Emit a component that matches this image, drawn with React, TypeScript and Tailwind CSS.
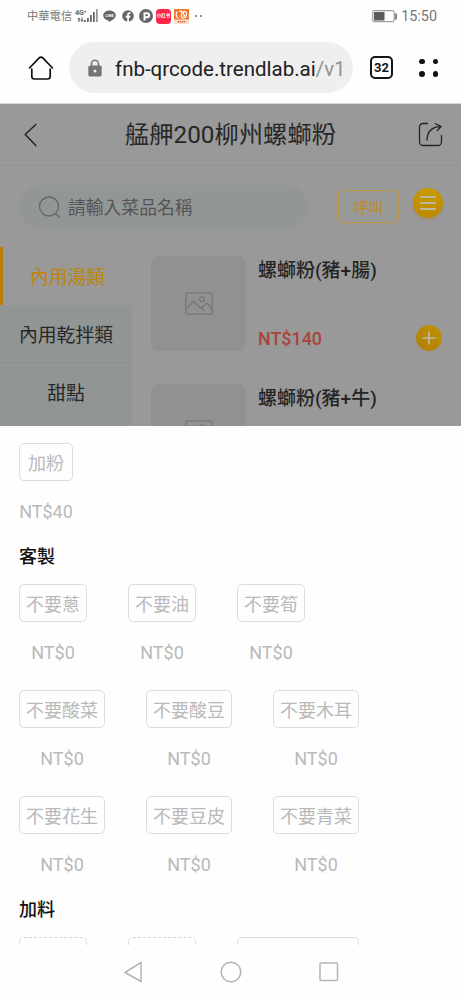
import { clsx } from "clsx";

type Option = { name: string; price: string };

const categories = ["內用湯類", "內用乾拌類", "甜點"];

const dishes: { name: string; price?: string }[] = [
    { name: "螺螄粉(豬+腸)", price: "NT$140" },
    { name: "螺螄粉(豬+牛)" },
];

const customRows: Option[][] = [
    [
        { name: "不要蔥", price: "NT$0" },
        { name: "不要油", price: "NT$0" },
        { name: "不要筍", price: "NT$0" },
    ],
    [
        { name: "不要酸菜", price: "NT$0" },
        { name: "不要酸豆", price: "NT$0" },
        { name: "不要木耳", price: "NT$0" },
    ],
    [
        { name: "不要花生", price: "NT$0" },
        { name: "不要豆皮", price: "NT$0" },
        { name: "不要青菜", price: "NT$0" },
    ],
];

const SignalIcon = () => (
    <svg width="24" height="17" viewBox="0 0 24 17" fill="#666">
        <text x="0" y="6.5" fontSize="7" fontWeight="700">
            4G⁺
        </text>
        <path d="M4 9.5 2.2 11.5h1.2V14h1.2v-2.5h1zM7 14l1.8-2H7.6V9.5H6.4V12h-1z" />
        <path d="M9 12h1.8v2H9zM12 10h1.8v4H12zM15 7h1.8v7H15zM18 4h1.8v10H18zM21.3 1h1.2v13h-1.2z" />
    </svg>
);

const StatusBar = () => (
    <div className="flex h-8 items-center pl-[27px] pr-[24px] text-[#777]">
        <span className="w-[48px] whitespace-nowrap pt-[2px] text-[11.3px] leading-4">
            中華電信
        </span>
        <SignalIcon />
        <svg className="ml-[4px]" width="13" height="13" viewBox="0 0 13 13">
            <path
                d="M6.5.5C3 .5.2 2.7.2 5.5c0 2.4 2.1 4.4 5 4.9.5.1.5.5.4 1.7 2.6-1.2 7.2-3.7 7.2-6.6C12.8 2.7 10 .5 6.5.5z"
                fill="#666"
            />
            <text
                x="6.5"
                y="7"
                fontSize="4"
                fontWeight="700"
                textAnchor="middle"
                fill="#fff"
            >
                LINE
            </text>
        </svg>
        <svg className="ml-[6px]" width="12" height="12" viewBox="0 0 12 12">
            <circle cx="6" cy="6" r="5.8" fill="#666" />
            <path
                d="M5.2 12V7.5H3.7V5.8h1.5V4.7c0-1.6.8-2.4 2.2-2.4h1.2v1.6h-.8c-.7 0-.9.3-.9.9v1h1.7l-.3 1.7H6.9V12z"
                fill="#fff"
            />
        </svg>
        <span className="ml-[5px] flex size-[14px] items-center justify-center rounded-full bg-[#666]">
            <svg width="9" height="9" viewBox="0 0 9 9" fill="none">
                <path
                    d="M2.5 8.5V1.3h2.6a2 2 0 0 1 0 4H2.5"
                    stroke="#fff"
                    strokeWidth="1.9"
                />
            </svg>
        </span>
        <span className="ml-[3px] flex size-[15px] items-center justify-center rounded-[4px] bg-[#fb2547]">
            <span className="text-[4.5px] font-bold leading-none text-white">
                小红书
            </span>
        </span>
        <svg className="ml-[3px]" width="15" height="15" viewBox="0 0 15 15">
            <path d="M0 0h15v15H0z" fill="#fbe3d2" />
            <path d="M0 0h15v10.5H0z" fill="#f0782f" />
            <path
                d="M3 2.5C1.5 5 2 8.5 4.5 9M5 2.5c3-1 4 1 2.5 3.5C6.5 8 8 9.5 10 9c3-1 3.5-5 1-6.5C9.5 2 8.5 3.5 9.5 5s1.5 1.5 0 2.5"
                fill="none"
                stroke="#fff"
                strokeWidth="1.2"
            />
            <path
                d="M3.5 12.8h8"
                stroke="#e9603c"
                strokeWidth="1.6"
                strokeDasharray="1.6 .5"
            />
        </svg>
        <span className="ml-[6px] size-[2px] rounded-full bg-[#666]" />
        <span className="ml-[3px] size-[2px] rounded-full bg-[#666]" />
        <svg
            className="ml-auto"
            width="26"
            height="13"
            viewBox="0 0 26 13"
            fill="none"
        >
            <rect x=".7" y=".7" width="21.5" height="11" rx="1.5" stroke="#888" />
            <rect x="2" y="2" width="10.5" height="8.5" fill="#5c5c5c" />
            <path d="M24 3.5v6" stroke="#777" strokeWidth="1.8" />
        </svg>
        <span className="ml-[3px] pt-[1px] text-[14.4px] leading-4">15:50</span>
    </div>
);

const AddressBar = () => (
    <div className="flex h-[72px] items-center border-b border-[#d8d8d8] pl-[28px] pr-[23px]">
        <svg
            width="26"
            height="26"
            viewBox="0 0 26 26"
            fill="none"
            stroke="#111"
            strokeWidth="1.7"
            strokeLinecap="round"
            strokeLinejoin="round"
        >
            <path d="M1.5 13 11.2 2.9a2.5 2.5 0 0 1 3.6 0L24.5 13" />
            <path d="M3.8 14v7.3a2.7 2.7 0 0 0 2.7 2.7h13a2.7 2.7 0 0 0 2.7-2.7V14" />
        </svg>
        <div className="ml-[15px] flex h-[51px] w-[284px] items-center rounded-full bg-[#efefef] pl-[19px]">
            <svg width="14" height="18" viewBox="0 0 14 18">
                <path
                    d="M3.5 8V4.7a3.5 3.5 0 0 1 7 0V8"
                    fill="none"
                    stroke="#757575"
                    strokeWidth="1.6"
                />
                <rect x=".3" y="6.5" width="13.4" height="11" rx="1.8" fill="#757575" />
                <circle cx="7" cy="12" r="1.5" fill="#efefef" />
            </svg>
            <span className="ml-[13px] whitespace-nowrap pt-[2px] text-[20.5px] leading-6 text-[#202020]">
                fnb-qrcode.trendlab.ai
                <span className="text-[#929292]">/v1</span>
            </span>
        </div>
        <span className="ml-[17px] flex size-[23px] items-center justify-center rounded-[5px] border-2 border-[#151515] text-[13px] font-bold leading-none text-[#151515]">
            32
        </span>
        <div className="ml-auto grid grid-cols-2 gap-x-[8px] gap-y-[7px]">
            {[0, 1, 2, 3].map((dot) => (
                <span key={dot} className="size-[5.5px] rounded-full bg-[#111]" />
            ))}
        </div>
    </div>
);

const ShopHeader = () => (
    <header className="flex h-[62px] shrink-0 items-center justify-between border-b border-[#929292] pl-[24px] pr-[18px]">
        <svg width="14" height="24" viewBox="0 0 14 24" fill="none">
            <path d="M12.3 1 1.2 11.5 12.3 23" stroke="#222" strokeWidth="1.4" />
        </svg>
        <h1 className="-mr-[5px] whitespace-nowrap pt-[1px] text-[24.3px] leading-8 text-[#272727]">
            艋舺200柳州螺螄粉
        </h1>
        <svg
            width="25"
            height="25"
            viewBox="0 0 25 25"
            fill="none"
            stroke="#252525"
            strokeWidth="1.3"
        >
            <path d="M10 1.5H5A3.5 3.5 0 0 0 1.5 5v15A3.5 3.5 0 0 0 5 23.5h15a3.5 3.5 0 0 0 3.5-3.5v-7" />
            <path d="M9 18.5C9 10 14 5 22.5 4.500M17 1.500l6 3-4 4.500" />
        </svg>
    </header>
);

const SearchRow = () => (
    <div className="flex h-[81px] shrink-0 items-start pl-[19px] pt-[19px]">
        <div className="flex h-[44px] w-[289px] items-center rounded-full bg-[#929695] pl-[19px]">
            <svg
                width="23"
                height="23"
                viewBox="0 0 23 23"
                fill="none"
                stroke="#666"
                strokeWidth="1.3"
            >
                <circle cx="11" cy="10.5" r="9.5" />
                <path d="m17.5 17.5 4 4" />
            </svg>
            <span className="ml-[7px] pt-[2px] text-[17.8px] text-[#555]">
                請輸入菜品名稱
            </span>
        </div>
        <div className="ml-[30px] mt-[5px] flex h-[33px] w-[61px] items-center justify-center rounded-[4px] border border-[#c39945] pt-[3px] text-[15px] text-[#c18a1c]">
            呼叫
        </div>
        <div className="ml-[14px] mt-[3px] flex size-[30px] items-center justify-center rounded-full bg-linear-to-b from-[#c99a00] to-[#bd8900] shadow-[0_2px_3px_rgba(170,120,30,0.3)]">
            <div className="flex w-[16px] flex-col gap-[4px]">
                <span className="h-[2px] rounded-full bg-[#bcb6a4]" />
                <span className="h-[2px] rounded-full bg-[#bcb6a4]" />
                <span className="h-[2px] rounded-full bg-[#bcb6a4]" />
            </div>
        </div>
    </div>
);

const DishCard = ({ name, price }: { name: string; price?: string }) => (
    <div className="flex h-[95px] shrink-0">
        <div className="flex size-[95px] items-center justify-center rounded-[8px] bg-[#919191]">
            <svg
                width="28"
                height="23"
                viewBox="0 0 28 23"
                fill="none"
                stroke="#777"
                strokeWidth="1.3"
            >
                <rect x=".8" y=".8" width="26.4" height="21.4" rx="2" />
                <circle cx="17" cy="7.2" r="2.3" />
                <path d="m1 17 7.5-7.5L19.500 19M16.500 16l5.500-5 5 6" />
            </svg>
        </div>
        <div className="ml-[12px] flex flex-1 flex-col justify-between">
            <div className="pt-[1px] text-[19px] font-medium leading-[28px] text-[#252525]">
                {name}
            </div>
            {price && (
                <div className="flex h-[26px] items-center justify-between pr-[19px]">
                    <span className="pt-[2px] text-[17.9px] font-medium text-[#a94438]">
                        {price}
                    </span>
                    <span className="flex size-[26px] items-center justify-center rounded-full bg-linear-to-tr from-[#b17e08] to-[#bf9300]">
                        <svg width="14" height="14" viewBox="0 0 14 14">
                            <path
                                d="M7 .5v13M.5 7h13"
                                stroke="#bdb9ac"
                                strokeWidth="1.7"
                            />
                        </svg>
                    </span>
                </div>
            )}
        </div>
    </div>
);

const Menu = () => (
    <div className="flex min-h-0 flex-1">
        <nav className="w-[132px] bg-[#919594]">
            {categories.map((category, index) => (
                <div
                    key={category}
                    className={clsx(
                        "flex h-[58px] items-center justify-center pt-[5px] text-[18.8px]",
                        index === 0
                            ? "border-l-[3px] border-[#b98005] bg-[#999] text-[#bd850b]"
                            : "border-b border-[#8b8f8e] text-[#272727]",
                    )}
                >
                    {category}
                </div>
            ))}
        </nav>
        <div className="flex flex-1 flex-col gap-[33px] pl-[19px] pt-[9px]">
            {dishes.map((dish) => (
                <DishCard key={dish.name} {...dish} />
            ))}
        </div>
    </div>
);

const OptionChip = ({ name, price }: Option) => (
    <div className="flex flex-col items-center">
        <div className="flex h-[38px] min-w-[54px] items-center justify-center rounded-[5px] border border-[#ddd] px-[6px] pt-[3px] text-[18px]">
            {name}
        </div>
        <div className="mt-[20px] h-[21px] text-[18px] leading-[21px]">
            {price}
        </div>
    </div>
);

const OptionSheet = () => (
    <section className="h-[519px] shrink-0 overflow-hidden bg-[#fefefe] pl-[19px] pt-[17px] text-[#b9b9b9]">
        <div className="flex">
            <OptionChip name="加粉" price="NT$40" />
        </div>
        <h2 className="mt-[21px] h-[27px] text-[18px] font-medium leading-[27px] text-[#111]">
            客製
        </h2>
        <div className="mt-[14px] flex flex-col gap-[27px]">
            {customRows.map((row) => (
                <div key={row[0].name} className="flex gap-[41px]">
                    {row.map((option) => (
                        <OptionChip key={option.name} {...option} />
                    ))}
                </div>
            ))}
        </div>
        <h2 className="mt-[20px] h-[27px] pt-[1px] text-[18px] font-medium leading-[27px] text-[#111]">
            加料
        </h2>
        {/* Only the top edges of the next row are in view */}
        <div className="mt-[15px] flex gap-[41px]">
            <div className="h-[38px] w-[68px] rounded-[5px] border border-[#ddd] border-t-[#d4d4d4] [border-top-style:dashed]" />
            <div className="h-[38px] w-[68px] rounded-[5px] border border-[#ddd] border-t-[#d4d4d4] [border-top-style:dashed]" />
            <div className="h-[38px] w-[122px] rounded-[5px] border border-[#ddd]" />
        </div>
    </section>
);

const NavigationBar = () => (
    <div className="flex flex-1 items-center justify-center gap-[77px] bg-[#fefefe]">
        <svg width="20" height="22" viewBox="0 0 20 22" fill="none">
            <path
                d="M18 1.5v19L2 11.5z"
                stroke="#b5b5b5"
                strokeWidth="1.5"
                strokeLinejoin="round"
            />
        </svg>
        <svg width="22" height="22" viewBox="0 0 22 22" fill="none">
            <circle cx="11" cy="11" r="9.8" stroke="#b5b5b5" strokeWidth="1.5" />
        </svg>
        <svg width="20" height="20" viewBox="0 0 20 20" fill="none">
            <rect
                x="1"
                y="1"
                width="17.5"
                height="17.5"
                rx="1"
                stroke="#b5b5b5"
                strokeWidth="1.5"
            />
        </svg>
    </div>
);

export default function App() {
    return (
        <div className="flex h-[999px] w-[461px] flex-col overflow-hidden bg-[#fefefe] font-['Roboto','Noto_Sans_CJK_TC',sans-serif]">
            <StatusBar />
            <AddressBar />
            <main className="flex h-[322px] shrink-0 flex-col overflow-hidden bg-[#999]">
                <ShopHeader />
                <SearchRow />
                <Menu />
            </main>
            <OptionSheet />
            <NavigationBar />
        </div>
    );
}
